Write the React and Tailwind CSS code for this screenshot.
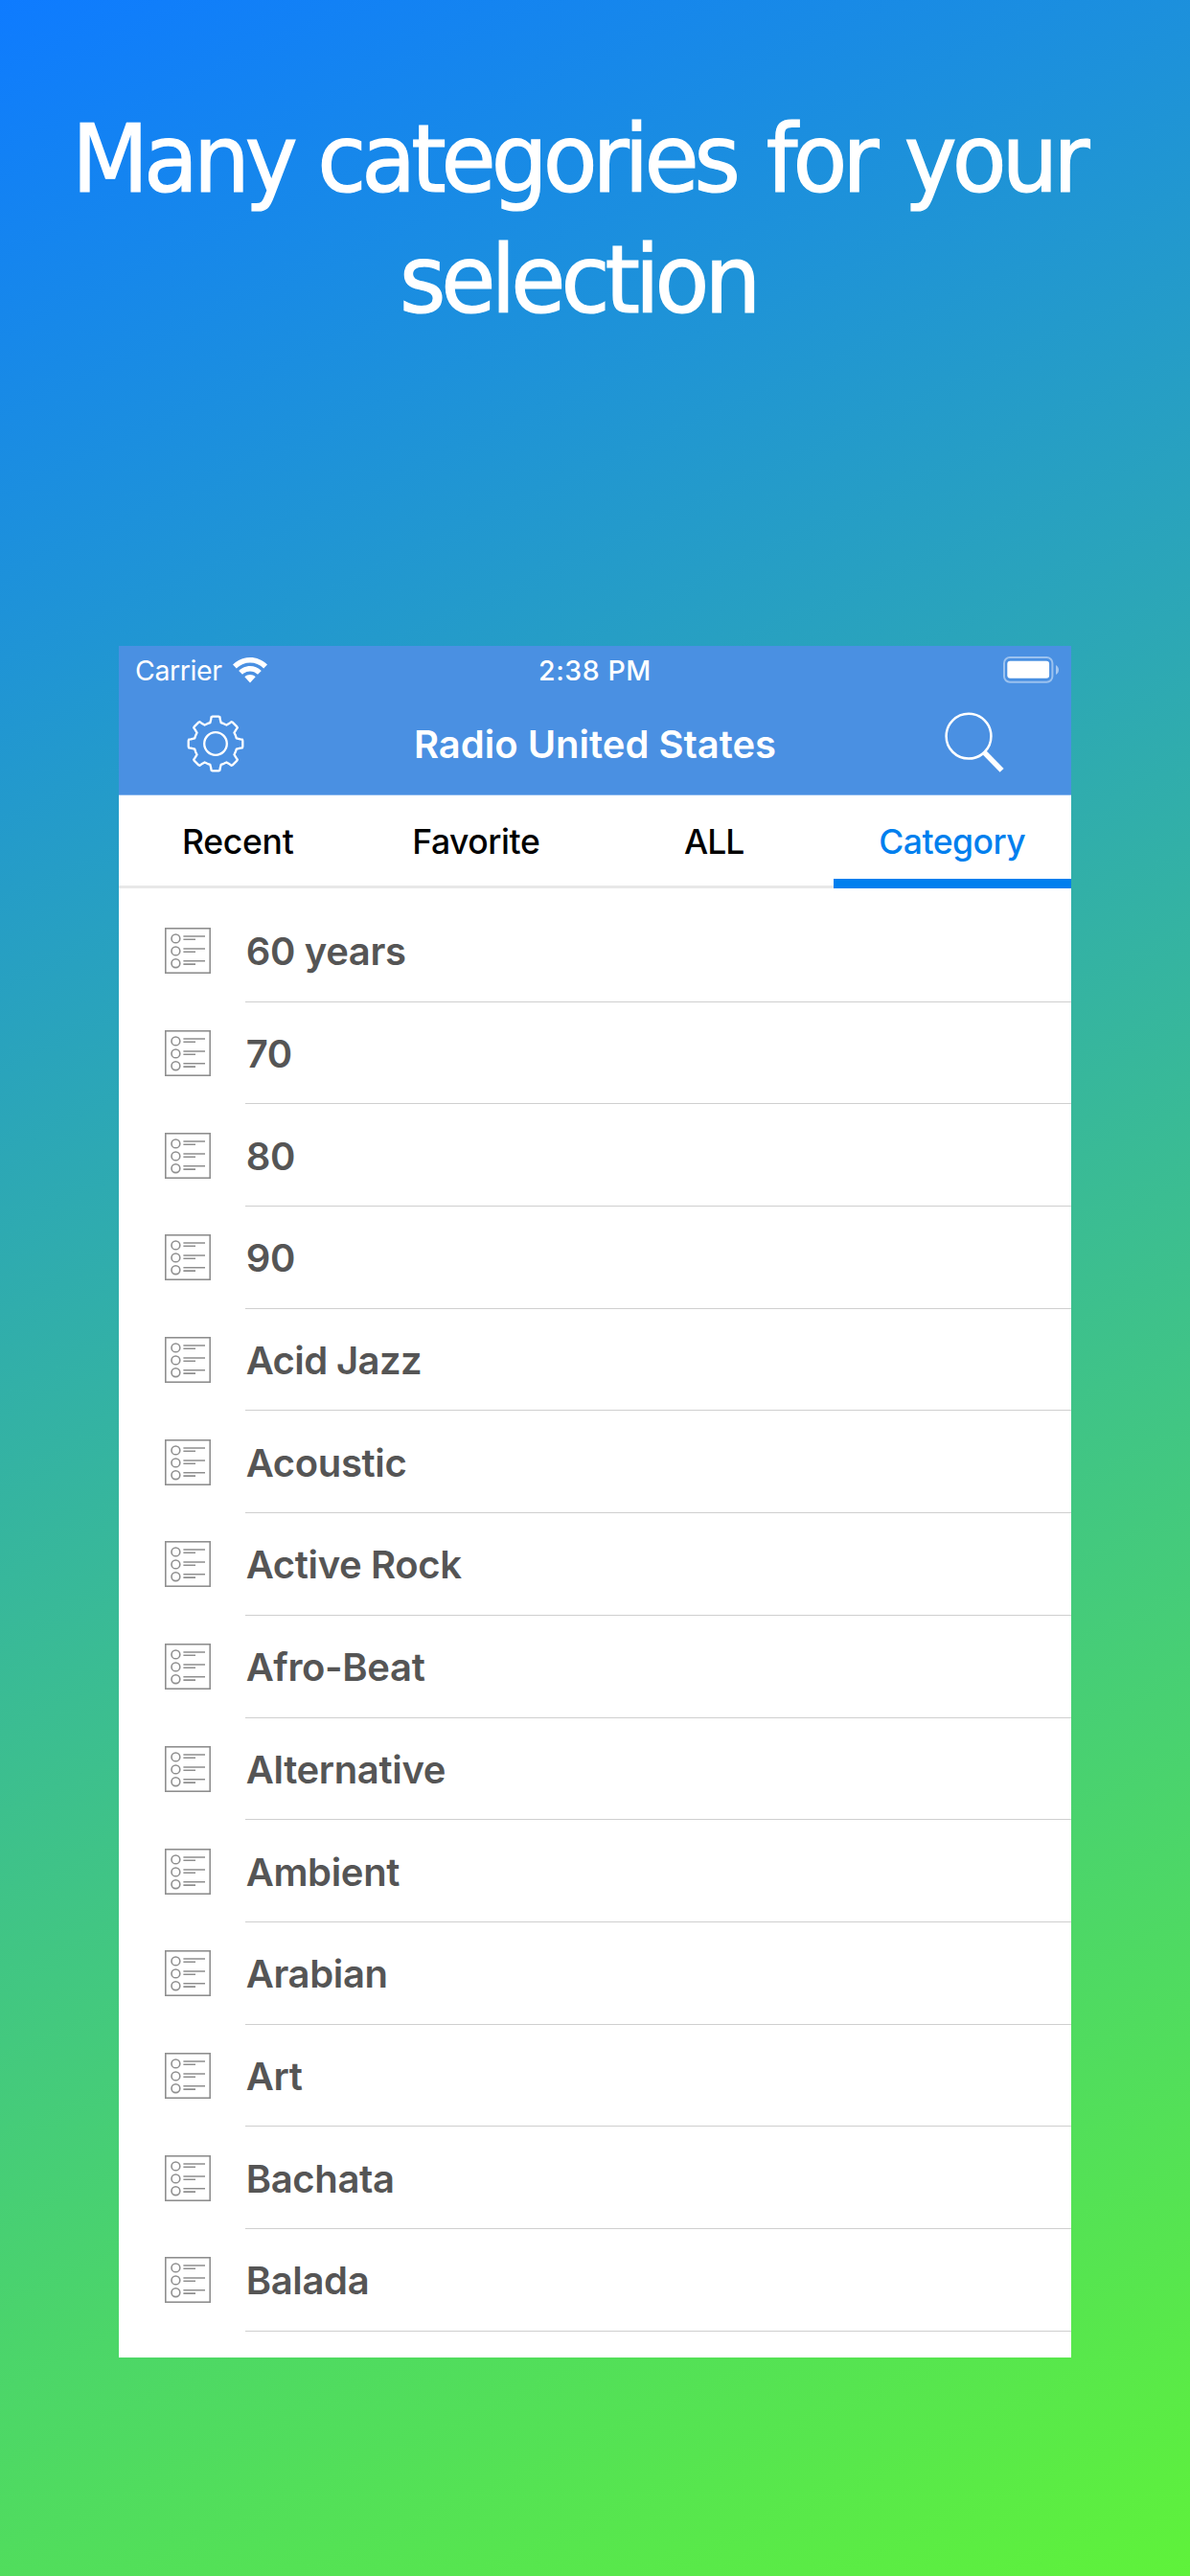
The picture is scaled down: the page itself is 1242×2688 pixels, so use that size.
const tabs = [
  { label: "Recent", cls: "text-black tracking-[-0.3px]" },
  { label: "Favorite", cls: "text-black tracking-[-0.44px]" },
  { label: "ALL", cls: "text-black tracking-[-1px]" },
  { label: "Category", cls: "text-[#007fee] tracking-[-0.5px]", active: true },
];

const categories = [
  { name: "60 years" },
  { name: "70" },
  { name: "80" },
  { name: "90" },
  { name: "Acid Jazz", tight: true },
  { name: "Acoustic" },
  { name: "Active Rock" },
  { name: "Afro-Beat" },
  { name: "Alternative" },
  { name: "Ambient" },
  { name: "Arabian" },
  { name: "Art" },
  { name: "Bachata" },
  { name: "Balada" },
];

const toothPoints = [
  [-5.7, -21.8],
  [-4.7, -25.8],
  [-4.4, -27.9],
  [-3, -28.3],
  [3, -28.3],
  [4.4, -27.9],
  [4.7, -25.8],
  [5.7, -21.8],
  [8.6, -20.8],
];

const gearPoints = Array.from({ length: 8 }, (_, i) => {
  const a = (i * Math.PI) / 4;
  return toothPoints
    .map(([x, y]) => {
      const px = x * Math.cos(a) - y * Math.sin(a);
      const py = x * Math.sin(a) + y * Math.cos(a);
      return `${(px + 30).toFixed(2)},${(py + 30).toFixed(2)}`;
    })
    .join(" ");
}).join(" ");

function GearIcon() {
  return (
    <svg className="h-[60px] w-[60px]" viewBox="0 0 60 60" fill="none" stroke="#fff" strokeWidth="2.3" strokeLinejoin="round">
      <polygon points={gearPoints} />
      <circle cx="30" cy="30" r="11.8" />
    </svg>
  );
}

function SearchIcon() {
  return (
    <svg className="h-[66px] w-[64px]" viewBox="0 0 64 66" fill="none" stroke="#fff">
      <circle cx="26" cy="27.2" r="23.4" strokeWidth="2.5" />
      <path d="M41.8 43.6 L60.6 62.9" strokeWidth="5.6" />
    </svg>
  );
}

function WifiIcon() {
  return (
    <svg className="h-[27px] w-[36px]" viewBox="0 0 36 27" fill="#fff">
      <path d="M0 7.6 C10 -2.5 26 -2.5 36 7.6 L32.2 11.5 C24.3 3.6 11.7 3.6 3.8 11.5 Z" />
      <path d="M6.2 14 C12.8 7.4 23.2 7.4 29.8 14 L26 17.8 C21.5 13.3 14.5 13.3 10 17.8 Z" />
      <path d="M12.3 20.2 C15.5 17.1 20.5 17.1 23.7 20.2 L18 26.6 Z" />
    </svg>
  );
}

function BatteryIcon() {
  return (
    <svg className="h-[28px] w-[59px]" viewBox="0 0 59 28">
      <rect x="1" y="1" width="50.4" height="25.8" rx="6" fill="none" stroke="#fff" strokeOpacity="0.45" strokeWidth="2" />
      <rect x="4.3" y="4.8" width="43.8" height="18" rx="3" fill="#fff" />
      <path d="M55 9 C59 11 59 17 55 19 Z" fill="#fff" fillOpacity="0.5" />
    </svg>
  );
}

function ListIcon() {
  return (
    <svg className="h-12 w-12" viewBox="0 0 48 48" fill="none" stroke="#8f8f8f" strokeWidth="1.6">
      <rect x="0.8" y="0.8" width="46.4" height="46.4" />
      {[11.4, 24.4, 37.2].map((y) => (
        <g key={y}>
          <circle cx="11.4" cy={y} r="4.4" />
          <path d={`M19.4 ${y - 2.4} H42 M19.4 ${y + 0.9} H32`} />
        </g>
      ))}
    </svg>
  );
}

export default function App() {
  return (
    <div className="flex h-[2688px] w-[1242px] flex-col overflow-hidden bg-[linear-gradient(155.2deg,#0e7bff_0%,#5ff23a_100%)] font-[Inter,sans-serif]">
      <h1 className="h-[674px] pt-[104px] font-['DejaVu_Sans_Condensed','DejaVu_Sans',sans-serif] text-[97.4px] leading-[126px] font-normal tracking-[-4.74px] whitespace-nowrap text-white [-webkit-text-stroke:1.2px_white] [font-stretch:condensed] [word-spacing:4px]">
        <span className="ml-[75px] block w-max origin-left scale-x-[1.06]">
          Many <span className="-ml-[3px]">categories</span> <span className="ml-[3px]">for</span>{" "}
          <span className="ml-[2.5px]">your</span>
        </span>
        <span className="ml-[417px] block w-max origin-left scale-x-[1.06]">selection</span>
      </h1>

      <main className="ml-[124px] flex h-[1786px] w-[994px] flex-col overflow-hidden bg-white">
        <header className="flex h-[156px] flex-col border-b border-[#85b5ee] bg-[#4a90e2] text-white">
          <div className="grid h-[50px] grid-cols-3 items-center text-[28.5px]">
            <div className="flex items-center gap-[11px] pl-[17px] tracking-[-0.4px]">
              <span className="pt-[2px]">Carrier</span>
              <WifiIcon />
            </div>
            <div className="pt-[2px] text-center font-medium tracking-[0.58px]">2:38 PM</div>
            <div className="flex justify-end pr-[12px]">
              <BatteryIcon />
            </div>
          </div>
          <div className="grid h-[105px] grid-cols-[1fr_auto_1fr] items-center">
            <div className="pb-[1px] pl-[71px]">
              <GearIcon />
            </div>
            <div className="text-[40px] font-semibold">Radio United States</div>
            <div className="flex justify-end pr-[69px] pb-[6px]">
              <SearchIcon />
            </div>
          </div>
        </header>

        <nav className="grid h-[97px] shrink-0 grid-cols-4 text-[35.5px] font-medium">
          {tabs.map((t) => (
            <div key={t.label} className={`flex flex-col ${t.cls}`}>
              <div className={`flex items-center justify-center ${t.active ? "h-[87px] pt-[10px]" : "h-[94px] pt-[3px]"}`}>{t.label}</div>
              <div className={t.active ? "h-[10px] bg-[#007fee]" : "h-[3px] bg-[#e8e8e8]"} />
            </div>
          ))}
        </nav>

        <ul className="pt-[12px]">
          {categories.map(({ name, tight }) => (
            <li key={name} className="flex h-[106.69px] items-center pl-[48px]">
              <ListIcon />
              <div
                className={`ml-[36px] flex h-full flex-1 items-center border-b border-[#cfcfcf] pt-[3px] pl-[0.7px] text-[40px] font-semibold text-[#555] ${
                  tight ? "tracking-[-0.6px]" : "tracking-[-0.35px]"
                }`}
              >
                {name}
              </div>
            </li>
          ))}
        </ul>
      </main>
    </div>
  );
}
